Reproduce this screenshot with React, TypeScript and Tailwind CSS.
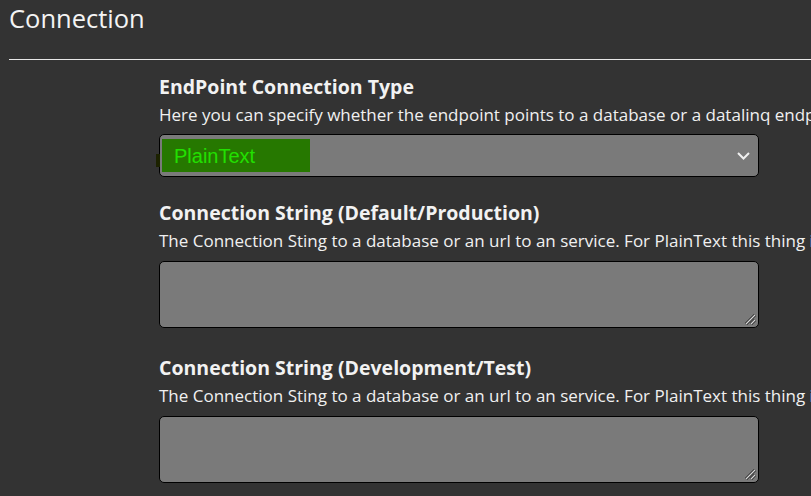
import React from "react";

function Section({
  title,
  desc,
  gap,
  children,
}: {
  title: string;
  desc: string;
  gap: string;
  children: React.ReactNode;
}) {
  return (
    <div className={gap}>
      <h3 className="text-[19.5px] font-bold leading-[26px] text-[#f2f2f2]">{title}</h3>
      <p className="mt-[4px] whitespace-nowrap text-[17px] leading-[22px] text-[#f0f0f0]">{desc}</p>
      {children}
    </div>
  );
}

function ResizeGrip() {
  return (
    <svg className="absolute bottom-[2px] right-[2px]" width="12" height="12" viewBox="0 0 12 12">
      <path d="M2 11 L11 2 M7 11 L11 7" stroke="#2a2a2a" strokeWidth="3" />
      <path d="M2 11 L11 2 M7 11 L11 7" stroke="#d8d8d8" strokeWidth="1.2" />
    </svg>
  );
}

export default function App() {
  return (
    <div
      className="h-[496px] w-[811px] overflow-hidden bg-[#333333] text-white"
      style={{ fontFamily: '"Open Sans", "Noto Sans", sans-serif' }}
    >
      <h1 className="pl-[9px] pt-[2px] text-[25.5px] leading-[32px] text-[#f4f4f4]">Connection</h1>
      <div className="ml-[9px] mt-[25px] h-px bg-[#e8e8e8]" />

      <div className="ml-[159px] mt-[14px] w-[600px]">
        <Section
          gap=""
          title="EndPoint Connection Type"
          desc="Here you can specify whether the endpoint points to a database or a datalinq endpoint."
        >
          <div className="relative mt-[8px] flex h-[43px] items-center rounded-[5px] border border-black bg-[#7a7a7a]">
            <div className="absolute left-[-4px] top-[19px] h-[13px] w-[4px] bg-[#1c2200]" />
            <div
              className="ml-[2px] flex h-[33px] w-[148px] items-center bg-[#267800] pl-[12px] text-[20px] text-[#22e000]"
              style={{ fontFamily: '"Liberation Sans", Arial, sans-serif' }}
            >
              PlainText
            </div>
            <svg className="absolute right-[7px] top-[13px]" width="15" height="15" viewBox="0 0 15 15" fill="none">
              <path d="M2 5 L7.5 10.5 L13 5" stroke="#f0f0f0" strokeWidth="2" />
            </svg>
          </div>
        </Section>

        <Section
          gap="mt-[23px]"
          title="Connection String (Default/Production)"
          desc="The Connection Sting to a database or an url to an service. For PlainText this thing is not used."
        >
          <div className="relative mt-[9px] h-[67px] rounded-[5px] border border-black bg-[#7a7a7a]">
            <ResizeGrip />
          </div>
        </Section>

        <Section
          gap="mt-[27px]"
          title="Connection String (Development/Test)"
          desc="The Connection Sting to a database or an url to an service. For PlainText this thing is not used."
        >
          <div className="relative mt-[9px] h-[67px] rounded-[5px] border border-black bg-[#7a7a7a]">
            <ResizeGrip />
          </div>
        </Section>
      </div>
    </div>
  );
}
